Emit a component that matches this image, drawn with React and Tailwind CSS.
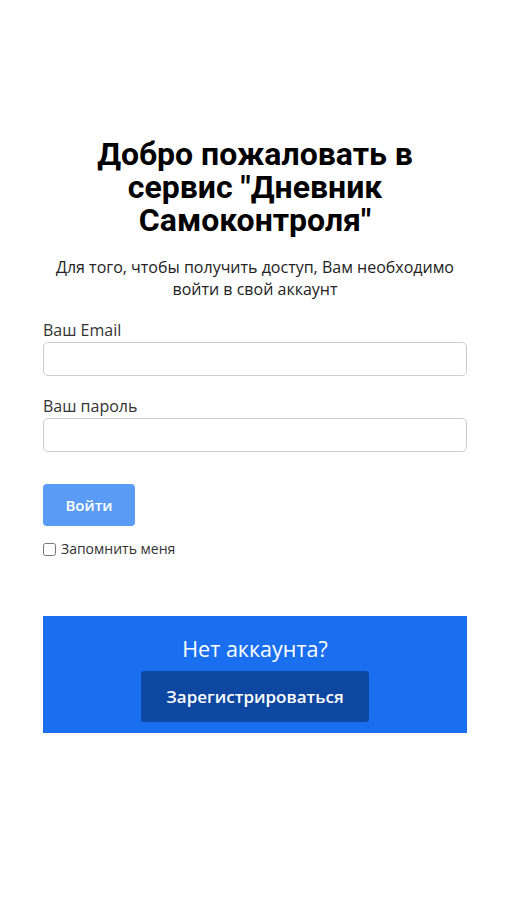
import React, { useState } from "react";

export default function App() {
  const [email, setEmail] = useState("");
  const [password, setPassword] = useState("");
  const [remember, setRemember] = useState(false);

  return (
    <div className="min-h-[900px] bg-white font-['Open_Sans',sans-serif] text-[#212529]">
      <div className="ml-[43px] w-[424px] pt-[138px]">
        <h1 className="text-center font-['Roboto',sans-serif] text-[32px] font-bold leading-[33px] text-black">
          Добро пожаловать в<br />
          сервис "Дневник
          <br />
          Самоконтроля"
        </h1>
        <p className="mt-[19px] text-center text-[16px] leading-[22px] text-[#222]">
          Для того, чтобы получить доступ, Вам необходимо
          <br />
          войти в свой аккаунт
        </p>

        <form className="mt-[19px]" onSubmit={(e) => e.preventDefault()}>
          <label className="block text-[16px] leading-[22px] text-[#333]">
            Ваш Email
          </label>
          <input
            type="email"
            value={email}
            onChange={(e) => setEmail(e.target.value)}
            className="mt-[1px] block h-[34px] w-full rounded-[5px] border border-[#ccc] px-2 outline-none"
          />

          <label className="mt-[19px] block text-[16px] leading-[22px] text-[#333]">
            Ваш пароль
          </label>
          <input
            type="password"
            value={password}
            onChange={(e) => setPassword(e.target.value)}
            className="mt-[1px] block h-[34px] w-full rounded-[5px] border border-[#ccc] px-2 outline-none"
          />

          <button
            type="submit"
            className="mt-[32px] h-[42px] w-[92px] rounded-[4px] bg-[#5a9cf5] text-[15px] font-semibold text-white"
          >
            Войти
          </button>

          <label className="mt-[14px] flex items-center gap-[5px] text-[14px] leading-[18px] text-[#333]">
            <input
              type="checkbox"
              checked={remember}
              onChange={(e) => setRemember(e.target.checked)}
              className="m-0 h-[13px] w-[13px]"
            />
            Запомнить меня
          </label>
        </form>

        <div className="mt-[58px] flex h-[117px] flex-col items-center bg-[#1a6ff0] pt-[19px]">
          <div className="text-[21.5px] leading-[28px] text-white">Нет аккаунта?</div>
          <button className="mt-[8px] h-[51px] w-[228px] rounded-[3px] bg-[#0e47a1] text-[17px] font-semibold text-white">
            Зарегистрироваться
          </button>
        </div>
      </div>
    </div>
  );
}
